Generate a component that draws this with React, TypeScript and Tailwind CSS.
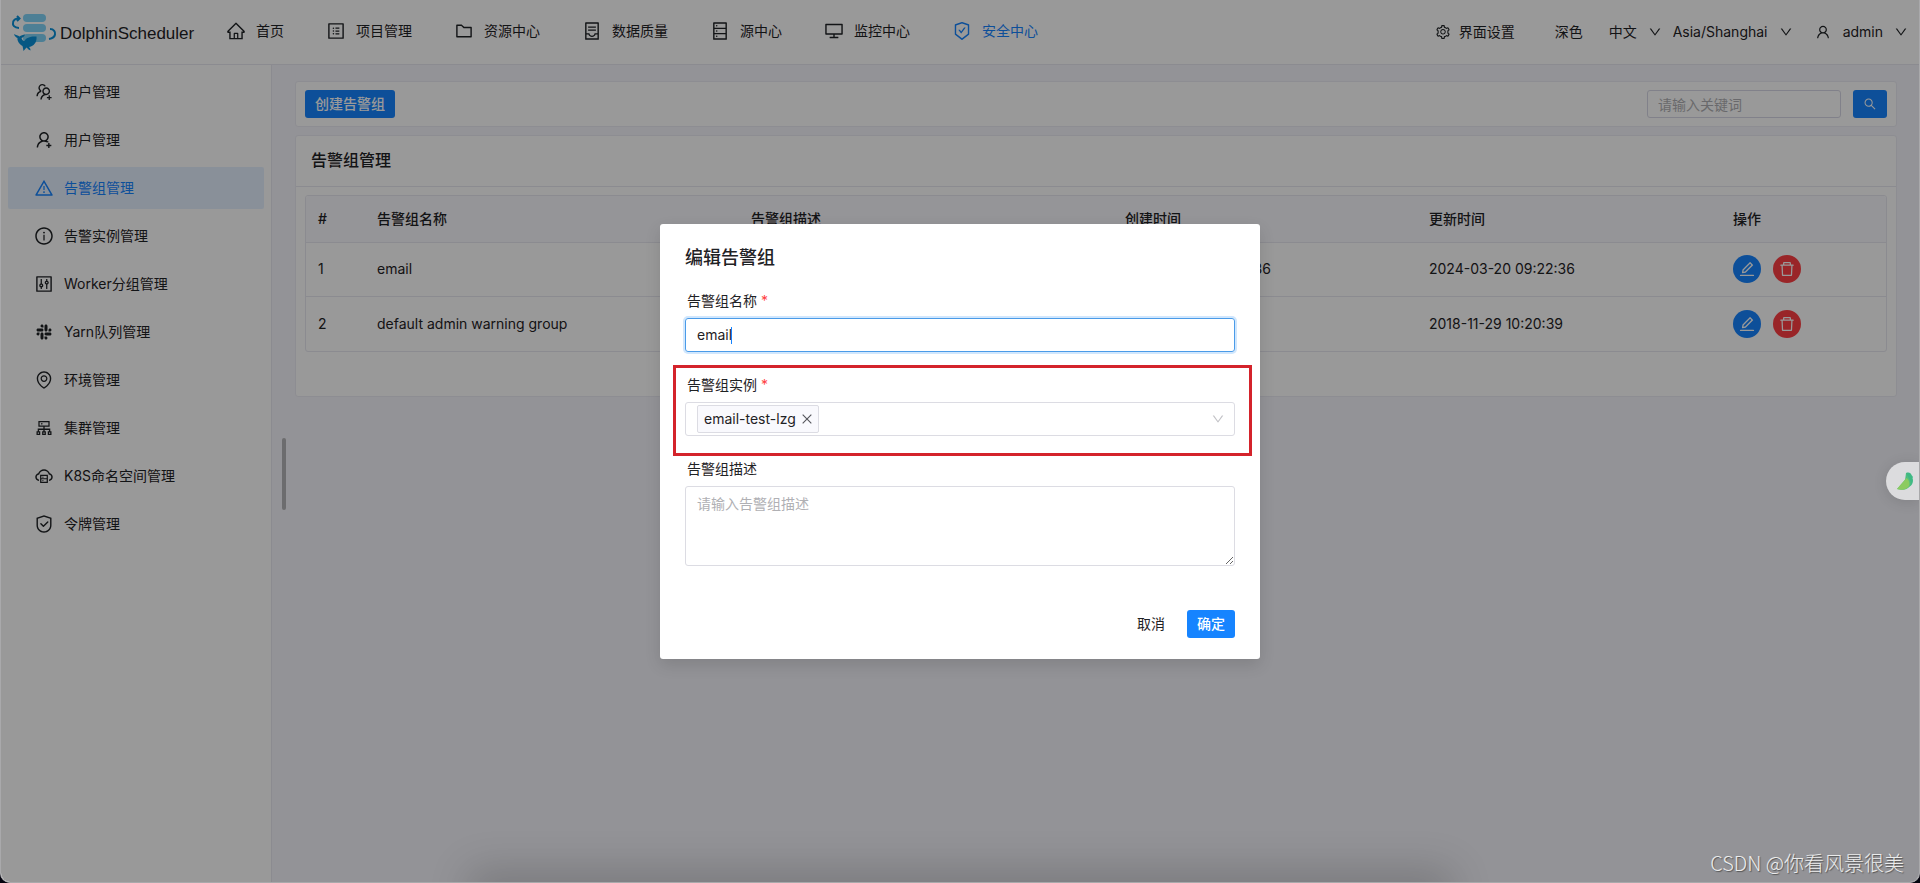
import type { IconType } from "react-icons";
import {
  AiOutlineClose,
  AiOutlineCloudServer,
  AiOutlineCluster,
  AiOutlineContainer,
  AiOutlineControl,
  AiOutlineDatabase,
  AiOutlineDelete,
  AiOutlineDesktop,
  AiOutlineDown,
  AiOutlineEdit,
  AiOutlineEnvironment,
  AiOutlineFolder,
  AiOutlineHome,
  AiOutlineInfoCircle,
  AiOutlineProfile,
  AiOutlineSafety,
  AiOutlineSafetyCertificate,
  AiOutlineSearch,
  AiOutlineSetting,
  AiOutlineSlack,
  AiOutlineUser,
  AiOutlineUserAdd,
  AiOutlineUsergroupAdd,
  AiOutlineWarning,
} from "react-icons/ai";
import clsx from "clsx";

type Item = { label: string; icon: IconType; active?: boolean };

const navItems: Item[] = [
  { label: "首页", icon: AiOutlineHome },
  { label: "项目管理", icon: AiOutlineProfile },
  { label: "资源中心", icon: AiOutlineFolder },
  { label: "数据质量", icon: AiOutlineContainer },
  { label: "源中心", icon: AiOutlineDatabase },
  { label: "监控中心", icon: AiOutlineDesktop },
  { label: "安全中心", icon: AiOutlineSafetyCertificate, active: true },
];

const sideItems: Item[] = [
  { label: "租户管理", icon: AiOutlineUsergroupAdd },
  { label: "用户管理", icon: AiOutlineUserAdd },
  { label: "告警组管理", icon: AiOutlineWarning, active: true },
  { label: "告警实例管理", icon: AiOutlineInfoCircle },
  { label: "Worker分组管理", icon: AiOutlineControl },
  { label: "Yarn队列管理", icon: AiOutlineSlack },
  { label: "环境管理", icon: AiOutlineEnvironment },
  { label: "集群管理", icon: AiOutlineCluster },
  { label: "K8S命名空间管理", icon: AiOutlineCloudServer },
  { label: "令牌管理", icon: AiOutlineSafety },
];

const rows = [
  {
    id: 1,
    name: "email",
    desc: "",
    created: "2024-03-20 09:22:36",
    updated: "2024-03-20 09:22:36",
  },
  {
    id: 2,
    name: "default admin warning group",
    desc: "default admin warning group",
    created: "2018-11-29 10:20:39",
    updated: "2018-11-29 10:20:39",
  },
];

const Logo = () => (
  <div className="flex w-[215px] items-center gap-[3px]">
    <svg viewBox="0 0 46 40" className="h-10 w-[46px]" fill="none">
      <g fill="#80d4f8">
        <rect x="12" y="2" width="23" height="8" rx="4" />
        <rect x="12" y="12" width="23" height="8" rx="4" />
        <rect x="12" y="22" width="23" height="8" rx="4" />
      </g>
      <g stroke="#0a92da" strokeWidth="2">
        <path d="M8 16C3 16 1.500 13 2 10.500C2.500 7.500 5 6.500 8 6.500" />
        <path d="M6 4L8.500 6.500L6 9" />
        <path d="M39 17C43 17 44.500 20 44 22.500C43.500 25.500 41 26.500 38 27" />
      </g>
      <path
        d="M3 22C5 23 7 23.500 8.500 24.500C10 23 12 23 14 22.500C13.500 24.500 12 25.500 10.500 26C11 28 12 29 13.500 29C15 25.500 20 24 25.500 24.500C26 29 24 33 20 34.500L18 35C19 36 19.500 37 19.500 38.500C18 38 17 37 15.500 35.500L12.500 39C12 37 12 35.500 11.500 34C8 32 6 28.500 6.500 26C5 25.500 3.500 24 3 22Z"
        fill="#0a92da"
      />
    </svg>
    <span className="pt-1 font-['Liberation_Sans',sans-serif] text-[17px]">DolphinScheduler</span>
  </div>
);

const HeaderSelect = ({ label, value }: { label: string; value: string }) => (
  <div className="relative flex items-center">
    <select aria-label={label} className="appearance-none bg-transparent pr-9 outline-none">
      <option>{value}</option>
    </select>
    <AiOutlineDown className="pointer-events-none absolute right-[11px] size-[14px]" />
  </div>
);

const Header = () => (
  <header className="flex h-[65px] items-center border-b border-[#e8e8f0] bg-white pl-[10px]">
    <Logo />
    <nav className="flex gap-[42px] pb-0.5">
      {navItems.map(({ label, icon: Icon, active }) => (
        <a
          key={label}
          href="#"
          className={clsx("flex items-center gap-[10px]", active && "text-[#1684ff]")}
        >
          <Icon className="size-5" />
          {label}
        </a>
      ))}
    </nav>
    <div className="ml-auto flex items-center pr-[11px]">
      <button className="mr-10 flex items-center gap-2">
        <AiOutlineSetting className="size-4" />
        界面设置
      </button>
      <button className="mr-[26px]">深色</button>
      <HeaderSelect label="语言" value="中文" />
      <HeaderSelect label="时区" value="Asia/Shanghai" />
      <button className="ml-[11px] flex items-center">
        <AiOutlineUser className="mr-3 size-4" />
        admin
        <AiOutlineDown className="ml-[11px] size-[14px]" />
      </button>
    </div>
  </header>
);

const Sidebar = () => (
  <aside className="relative w-[271px] shrink-0 border-r border-[#e8e8f0] bg-white">
    <nav className="flex flex-col gap-1.5 px-[7px] pt-1.5">
      {sideItems.map(({ label, icon: Icon, active }) => (
        <a
          key={label}
          href="#"
          className={clsx(
            "flex h-[42px] items-center gap-[10px] rounded-xs pl-[26px]",
            active && "bg-[#e5f1ff] text-[#1684ff]",
          )}
        >
          <Icon className="size-5" />
          {label}
        </a>
      ))}
    </nav>
    <span className="absolute top-1/2 -right-[15px] h-[72px] w-1 -translate-y-1/2 rounded-full bg-[#b4b4b8]" />
  </aside>
);

const GroupTable = () => (
  <div className="overflow-hidden rounded-[3px] border border-[#e8e8f0]">
    <table className="w-full table-fixed text-left">
      <colgroup>
        <col className="w-[59px]" />
        <col className="w-[374px]" />
        <col className="w-[374px]" />
        <col className="w-[304px]" />
        <col className="w-[304px]" />
        <col className="w-[165px]" />
      </colgroup>
      <thead className="bg-[#f9f9fd]">
        <tr className="h-[46px]">
          {["#", "告警组名称", "告警组描述", "创建时间", "更新时间", "操作"].map((title) => (
            <th key={title} className="px-3 font-medium">
              {title}
            </th>
          ))}
        </tr>
      </thead>
      <tbody>
        {rows.map((row) => (
          <tr key={row.id} className="h-[54px] border-t border-[#e8e8f0] last:h-[55px]">
            <td className="px-3">{row.id}</td>
            <td className="px-3">{row.name}</td>
            <td className="px-3">{row.desc}</td>
            <td className="px-3">{row.created}</td>
            <td className="px-3">{row.updated}</td>
            <td className="px-3">
              <div className="flex gap-3 text-white">
                <button
                  aria-label="编辑"
                  className="flex size-7 items-center justify-center rounded-full bg-[#1684ff]"
                >
                  <AiOutlineEdit className="size-[18px]" />
                </button>
                <button
                  aria-label="删除"
                  className="flex size-7 items-center justify-center rounded-full bg-[#ff3f43]"
                >
                  <AiOutlineDelete className="size-[18px]" />
                </button>
              </div>
            </td>
          </tr>
        ))}
      </tbody>
    </table>
  </div>
);

const Content = () => (
  <main className="flex min-w-0 flex-1 flex-col gap-2 pt-4 pr-[22px] pl-[23px]">
    <div className="flex items-center justify-between rounded-[3px] border border-[#ececf3] bg-white px-[9px] py-2">
      <button className="h-7 rounded-[3px] bg-[#1684ff] px-[10px] font-medium text-white">
        创建告警组
      </button>
      <div className="flex gap-3">
        <input
          aria-label="关键词"
          placeholder="请输入关键词"
          className="h-7 w-[194px] rounded-[3px] border border-[#d8d8e6] px-[10px] outline-none placeholder:text-[#b0b0b4]"
        />
        <button
          aria-label="搜索"
          className="flex h-7 w-[34px] items-center justify-center rounded-[3px] bg-[#1684ff] text-white"
        >
          <AiOutlineSearch className="size-[14px]" />
        </button>
      </div>
    </div>
    <section className="rounded-[3px] border border-[#ececf3] bg-white">
      <h2 className="flex h-[51px] items-center border-b border-[#e8e8f0] px-[15px] pb-0.5 text-base font-medium">
        告警组管理
      </h2>
      <div className="px-[9px] pt-2 pb-11">
        <GroupTable />
      </div>
    </section>
  </main>
);

const FieldLabel = ({ id, text, required }: { id: string; text: string; required?: boolean }) => (
  <label htmlFor={id} className="flex h-[26px] pb-2 pl-0.5 leading-[18px]">
    {text}
    {required && <span className="pl-1 text-[#ff3f43]">*</span>}
  </label>
);

const EditDialog = () => (
  <div
    role="dialog"
    aria-labelledby="dialog-title"
    className="w-[600px] rounded-[3px] bg-white px-[25px] pt-5 pb-[21px] shadow-[0_6px_16px_rgba(0,0,0,0.12)]"
  >
    <h1 id="dialog-title" className="mb-5 text-lg leading-7 font-medium">
      编辑告警组
    </h1>

    <div className="relative mb-6">
      <FieldLabel id="group-name" text="告警组名称" required />
      <input
        id="group-name"
        defaultValue="email"
        className="block h-[34px] w-full rounded-[3px] border border-[#4a9be8] px-[11px] pb-px caret-transparent shadow-[0_0_0_2px_#d1e7fd] outline-none"
      />
      <span className="absolute bottom-2 left-[46px] h-[17px] w-px bg-[#1684ff]" />
    </div>

    <div className="relative mb-6">
      <FieldLabel id="group-instance" text="告警组实例" required />
      <div className="relative flex items-center">
        <select
          id="group-instance"
          className="block h-[34px] w-full appearance-none rounded-[3px] border border-[#dcdce3] bg-white outline-none"
        >
          <option value=""></option>
        </select>
        <span className="absolute left-3 flex h-7 items-center gap-1 rounded-xs border border-[#dcdce3] bg-[#f9f9fd] pr-1 pl-1.5">
          email-test-lzg
          <button aria-label="移除" className="text-[#55565c]">
            <AiOutlineClose className="size-[14px]" />
          </button>
        </span>
        <AiOutlineDown className="pointer-events-none absolute right-[10px] size-[14px] text-[#c2c2c6]" />
      </div>
      <div className="pointer-events-none absolute -top-[11px] -right-[17px] -bottom-5 -left-3 border-3 border-[#d4232b]" />
    </div>

    <div className="mb-11">
      <FieldLabel id="group-desc" text="告警组描述" />
      <textarea
        id="group-desc"
        placeholder="请输入告警组描述"
        className="block h-20 w-full resize-y rounded-[3px] border border-[#dcdce3] px-[11px] py-1.5 outline-none placeholder:text-[#b0b0b4]"
      />
    </div>

    <div className="flex justify-end gap-3">
      <button className="h-7 px-[10px]">取消</button>
      <button className="h-7 rounded-[3px] bg-[#1684ff] px-[10px] font-medium text-white">
        确定
      </button>
    </div>
  </div>
);

const BirdIcon = () => (
  <svg viewBox="0 0 18 18" className="size-[18px]">
    <path d="M10 1C13 0 15 1 15.500 3L17 5L16.500 6C18 10 16 15 11 15L9 9Z" fill="#3fb984" />
    <path d="M10 1L10.500 6L1 17C7 19 14 17 14.500 12C15 8 12 6 10 1Z" fill="#56c07a" />
    <path d="M10.500 6L1 17C6 18.500 11 17.500 13 14C14 11 13 8 10.500 6Z" fill="#8ccb60" />
  </svg>
);

export default function App() {
  return (
    <div className="flex min-h-screen bg-[#05040f] font-['Inter','Noto_Sans_CJK_SC',sans-serif] text-sm leading-[22px] text-[#1f2225]">
      <div className="relative flex flex-1 flex-col overflow-hidden rounded-b-[10px] border-x border-b border-[#a9a9ab] bg-[#f6f5fc]">
        <Header />
        <div className="flex flex-1">
          <Sidebar />
          <Content />
        </div>

        <div className="absolute inset-0 flex items-center justify-center bg-black/40">
          <div className="absolute -bottom-5 left-1/4 h-5 w-1/2 shadow-[0_0_40px_12px_rgba(0,0,0,0.18)]" />
          <EditDialog />
        </div>

        <button
          aria-label="助手"
          className="absolute top-[462px] right-0 flex h-[38px] w-[33px] items-center rounded-l-full bg-[#dcdcde] pl-[10px] shadow-[0_2px_14px_rgba(0,0,0,0.12)]"
        >
          <BirdIcon />
        </button>
        <p className="absolute right-[15px] bottom-[5px] font-['Noto_Sans_CJK_SC',sans-serif] text-xl leading-7 font-light text-[#ececec] [text-shadow:1px_1px_1px_#555]">
          CSDN @你看风景很美
        </p>
      </div>
    </div>
  );
}
